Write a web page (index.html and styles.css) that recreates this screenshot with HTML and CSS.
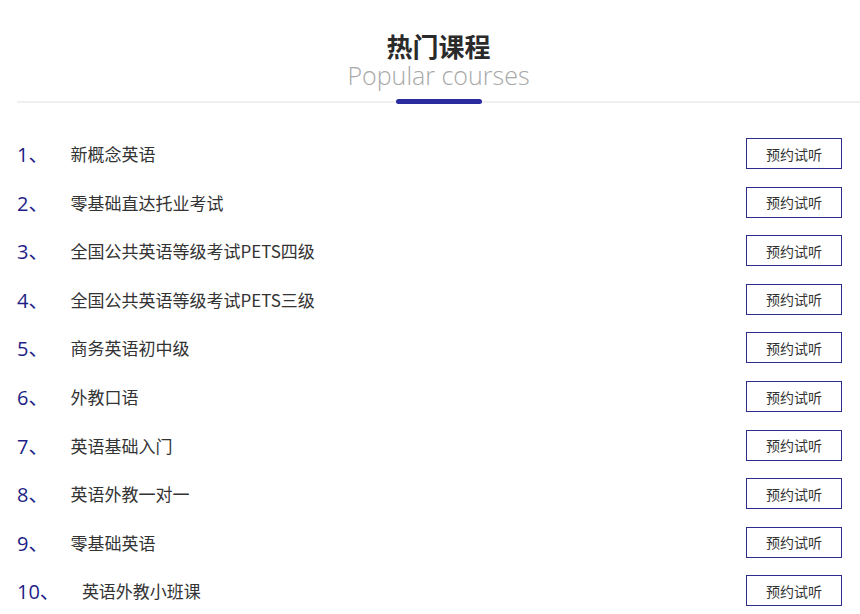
FILE: index.html
```html
<!DOCTYPE html>
<html lang="zh">
<head>
<meta charset="utf-8">
<title>热门课程</title>
<link rel="stylesheet" href="styles.css">
</head>
<body>
<div class="wrap">
  <div class="head">
    <h2 class="title">热门课程</h2>
    <div class="sub">Popular courses</div>
    <div class="rule"><span class="bar"></span></div>
  </div>
  <ul class="list">
    <li class="row"><span class="num">1、</span><span class="name">新概念英语</span><a class="btn">预约试听</a></li>
    <li class="row"><span class="num">2、</span><span class="name">零基础直达托业考试</span><a class="btn">预约试听</a></li>
    <li class="row"><span class="num">3、</span><span class="name">全国公共英语等级考试PETS四级</span><a class="btn">预约试听</a></li>
    <li class="row"><span class="num">4、</span><span class="name">全国公共英语等级考试PETS三级</span><a class="btn">预约试听</a></li>
    <li class="row"><span class="num">5、</span><span class="name">商务英语初中级</span><a class="btn">预约试听</a></li>
    <li class="row"><span class="num">6、</span><span class="name">外教口语</span><a class="btn">预约试听</a></li>
    <li class="row"><span class="num">7、</span><span class="name">英语基础入门</span><a class="btn">预约试听</a></li>
    <li class="row"><span class="num">8、</span><span class="name">英语外教一对一</span><a class="btn">预约试听</a></li>
    <li class="row"><span class="num">9、</span><span class="name">零基础英语</span><a class="btn">预约试听</a></li>
    <li class="row"><span class="num">10、</span><span class="name">英语外教小班课</span><a class="btn">预约试听</a></li>
  </ul>
</div>
</body>
</html>
```
FILE: styles.css
```css
html, body {
  margin: 0;
  padding: 0;
  background: #fff;
}
body {
  font-family: "Noto Sans CJK SC", "Noto Sans", sans-serif;
  color: #333;
}
.wrap {
  margin-left: 17px;
  width: 843px;
}
.head {
  padding-top: 31px;
  text-align: center;
}
.title {
  margin: 0;
  font-size: 26px;
  line-height: 30px;
  font-weight: 700;
  color: #2a2a2a;
}
.sub {
  font-family: "Open Sans", "Noto Sans", sans-serif;
  font-weight: 300;
  font-size: 25px;
  line-height: 28px;
  color: #a8a8a8;
}
.rule {
  position: relative;
  height: 2px;
  margin-top: 12px;
  background: #f0f0f0;
}
.bar {
  position: absolute;
  left: 50%;
  top: -2px;
  width: 86px;
  height: 5px;
  margin-left: -43px;
  border-radius: 3px;
  background: #2b2ba0;
}
.list {
  list-style: none;
  margin: 26.5px 0 0;
  padding: 0;
}
.row {
  display: flex;
  align-items: center;
  height: 48.56px;
}
.num {
  font-family: "Open Sans", "Noto Sans", "Noto Sans CJK SC", sans-serif;
  font-size: 20px;
  color: #1e1e86;
}
.name {
  flex: 1;
  margin-left: 22px;
  font-size: 17px;
  color: #333;
}
.btn {
  box-sizing: border-box;
  width: 96px;
  height: 31px;
  margin-right: 18px;
  border: 1px solid #2c2c8c;
  display: flex;
  align-items: center;
  justify-content: center;
  font-size: 14px;
  color: #333;
}
```
